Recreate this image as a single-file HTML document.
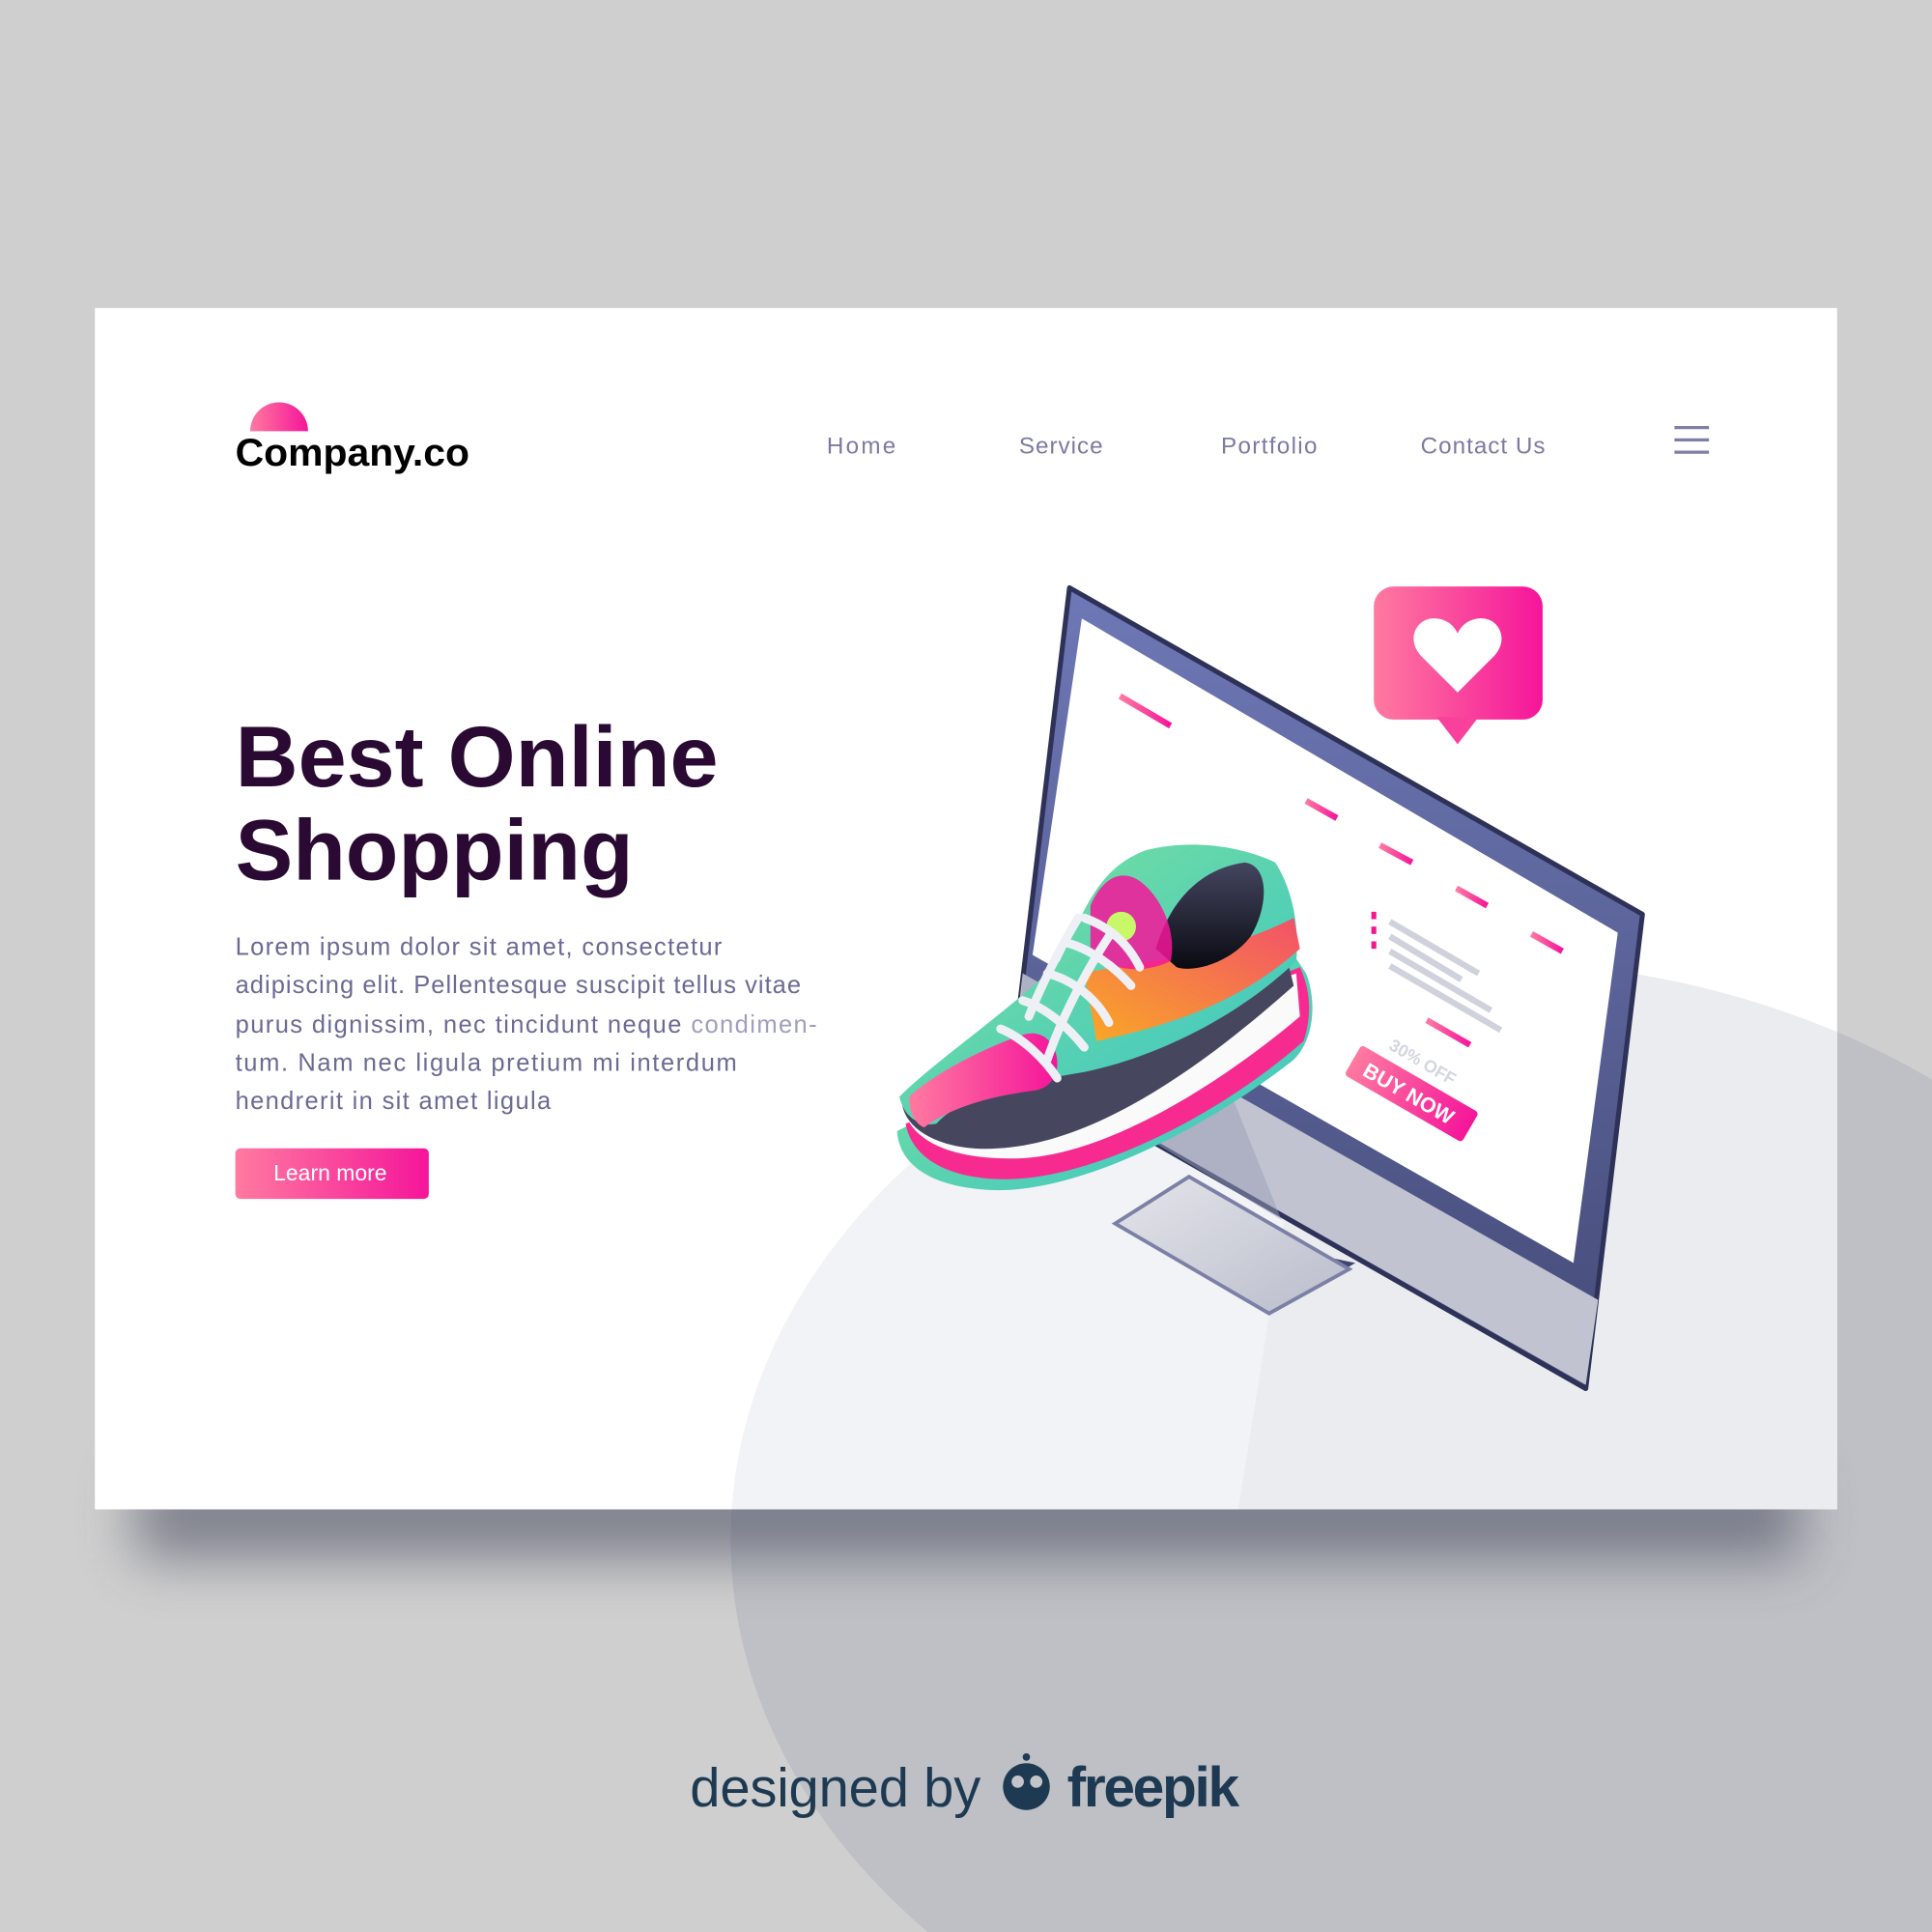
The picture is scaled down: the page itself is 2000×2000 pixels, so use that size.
<!DOCTYPE html>
<html><head><meta charset="utf-8"><style>
html,body{margin:0;padding:0;background:#cfcfcf;overflow:hidden;width:2000px;height:2000px}
svg{display:block}
text{font-family:"Liberation Sans",sans-serif}
</style></head><body>
<svg width="2000" height="2000" viewBox="0 0 1568 1568" xmlns="http://www.w3.org/2000/svg">
<defs>
<filter id="sh" x="-50%" y="-200%" width="200%" height="500%"><feGaussianBlur stdDeviation="22"/></filter>
<clipPath id="card"><rect x="77" y="250" width="1414" height="975"/></clipPath>
<clipPath id="ell"><ellipse cx="1200" cy="1250" rx="607" ry="470"/></clipPath>
<linearGradient id="pk" x1="0" x2="1"><stop offset="0" stop-color="#ff7aa0"/><stop offset="1" stop-color="#f5159a"/></linearGradient>
<linearGradient id="frm" x1="0" y1="0" x2="0" y2="1"><stop offset="0" stop-color="#6e78b6"/><stop offset="1" stop-color="#454b78"/></linearGradient>
<linearGradient id="tl" x1="0" y1="0" x2="1" y2="1"><stop offset="0" stop-color="#7fe39a"/><stop offset="1" stop-color="#38c3c6"/></linearGradient>
<linearGradient id="dk" x1="0" y1="0" x2="0" y2="1"><stop offset="0" stop-color="#444660"/><stop offset="1" stop-color="#0a0a12"/></linearGradient>
<linearGradient id="or" x1="0" y1="1" x2="1" y2="0"><stop offset="0" stop-color="#f9a825"/><stop offset="1" stop-color="#f2506a"/></linearGradient>
<linearGradient id="base" x1="0" y1="0" x2="1" y2="1"><stop offset="0" stop-color="#e4e5ea"/><stop offset="1" stop-color="#b9bccb"/></linearGradient>
</defs>
<rect width="1568" height="1568" fill="#cfcfcf"/>
<ellipse cx="1200" cy="1250" rx="607" ry="470" fill="#bfc0c5"/>
<rect x="110" y="1195" width="1350" height="70" fill="#4a4d60" opacity="0.6" filter="url(#sh)"/>
<rect x="77" y="250" width="1414" height="975" fill="#fff"/>
<g clip-path="url(#card)">
<ellipse cx="1200" cy="1250" rx="607" ry="470" fill="#eaecef"/>
<g clip-path="url(#ell)"><polygon points="560,1225 1005,1225 1060,880 560,880" fill="#f4f5f7" opacity="0.8"/></g>
</g>
<!-- logo -->
<path d="M203,350 A23,23 0 0 1 250,350 Z" fill="url(#pk)"/>
<text x="191" y="378" font-size="31" font-weight="bold" fill="#000" textLength="190" lengthAdjust="spacingAndGlyphs">Company.co</text>
<g font-size="19" fill="#7c7aa0">
<text x="671" y="368" textLength="56">Home</text><text x="827" y="368" textLength="68">Service</text><text x="991" y="368" textLength="78">Portfolio</text><text x="1153" y="368" textLength="101">Contact Us</text>
</g>
<g stroke="#7f7ea3" stroke-width="2.6"><line x1="1359" y1="347" x2="1387" y2="347"/><line x1="1359" y1="357" x2="1387" y2="357"/><line x1="1359" y1="367" x2="1387" y2="367"/></g>
<text x="191" y="638" font-size="70" font-weight="bold" fill="#2a0a33" textLength="392" lengthAdjust="spacingAndGlyphs">Best Online</text>
<text x="191" y="714" font-size="70" font-weight="bold" fill="#2a0a33" textLength="323" lengthAdjust="spacingAndGlyphs">Shopping</text>
<g font-size="20" fill="#6c6a93">
<text x="191" y="775" textLength="395">Lorem ipsum dolor sit amet, consectetur</text>
<text x="191" y="806" textLength="459">adipiscing elit. Pellentesque suscipit tellus vitae</text>
<text x="191" y="838" textLength="472">purus dignissim, nec tincidunt neque <tspan fill="#a09fbd">condimen-</tspan></text>
<text x="191" y="869" textLength="407">tum. Nam nec ligula pretium mi interdum</text>
<text x="191" y="900" textLength="256">hendrerit in sit amet ligula</text>
</g>
<rect x="191" y="932" width="157" height="41" rx="4" fill="url(#pk)"/>
<text x="268" y="958" font-size="18" fill="#fff" text-anchor="middle">Learn more</text>
<!-- stand -->
<polygon points="980,1000 1100,1025 1035,1063" fill="#3f4470"/>
<polygon points="905,993 965,955 1095,1030 1030,1066" fill="url(#base)" stroke="#7c80a6" stroke-width="3"/>
<!-- monitor -->
<polygon points="868,477 1333,742 1287,1127 822,862" fill="url(#frm)" stroke="#2e3258" stroke-width="4" stroke-linejoin="round"/>
<polygon points="1297,1055 1287,1124 822,860 830,790" fill="#c1c4d0"/>
<polygon points="878,502 1313,757 1277,1025 838,775" fill="#fff"/>
<polygon points="830,790 1000,890 1040,990 826,860" fill="#9a9db6" opacity="0.5"/>
<g stroke="url(#pk)" stroke-width="5">
<line x1="909" y1="565" x2="950" y2="589"/><line x1="1060" y1="650" x2="1085" y2="664"/><line x1="1120" y1="686" x2="1146" y2="700"/><line x1="1182" y1="721" x2="1207" y2="735"/><line x1="1243" y1="758" x2="1268" y2="772"/><line x1="1158" y1="828" x2="1193" y2="848"/>
</g>
<g stroke="#cfd2dc" stroke-width="5">
<line x1="1128" y1="748" x2="1200" y2="790"/><line x1="1128" y1="760" x2="1186" y2="795"/><line x1="1128" y1="772" x2="1210" y2="820"/><line x1="1128" y1="784" x2="1218" y2="836"/>
</g>
<g fill="#f5158f"><rect x="1113" y="740" width="4" height="6"/><rect x="1113" y="752" width="4" height="6"/><rect x="1113" y="764" width="4" height="6"/></g>
<g transform="translate(1105,848) rotate(30)">
<rect x="0" y="0" width="110" height="28" rx="3" fill="url(#pk)"/>
<text x="12" y="21" font-size="17" font-weight="bold" fill="#fff">BUY NOW</text>
<text x="20" y="-8" font-size="14" font-weight="bold" fill="#d3d5df">30% OFF</text>
</g>
<!-- heart bubble -->
<rect x="1115" y="476" width="137" height="108" rx="16" fill="url(#pk)"/>
<polygon points="1166,582 1200,582 1183,604" fill="#f9409a"/>
<path d="M1183,562 L1154,533 C1140,519 1150,500 1166,502 C1175,503 1180,508 1183,514 C1186,508 1191,503 1200,502 C1216,500 1226,519 1212,533 Z" fill="#fff"/>
<!-- shoe -->
<path d="M728,918 C730,948 760,965 810,966 C880,966 980,915 1050,860 C1068,842 1068,810 1060,790 L1040,760 Z" fill="url(#tl)"/>
<path d="M735,912 C740,940 770,958 820,957 C890,955 990,905 1058,845 C1066,820 1062,800 1055,785 Z" fill="#f72a8f"/>
<path d="M735,905 C745,930 780,942 830,940 C900,936 990,880 1055,825 L1052,790 Z" fill="#fafafa"/>
<path d="M732,895 C735,920 770,935 810,932 C880,928 960,880 1050,800 L1040,760 Z" fill="#46475f"/>
<path d="M730,890 C760,860 820,820 860,780 C880,740 890,705 930,690 C970,680 1010,688 1035,700 C1048,720 1055,750 1052,780 C1000,830 930,860 880,870 C820,880 780,890 760,912 C745,915 733,905 730,890 Z" fill="url(#tl)"/>
<path d="M738,890 C760,870 800,850 830,840 C860,830 870,880 840,885 C800,890 770,900 750,915 C742,912 737,900 738,890 Z" fill="url(#pk)"/>
<path d="M880,790 C920,780 980,780 1050,745 L1055,770 C1010,810 960,830 890,845 Z" fill="url(#or)"/>
<path d="M938,770 C950,730 975,705 1010,700 C1030,702 1030,735 1015,760 C1000,780 970,790 955,785 Z" fill="url(#dk)"/>
<path d="M885,735 C895,712 910,705 925,715 C945,730 955,760 950,780 C930,790 900,790 885,770 Z" fill="#f5159a" opacity="0.85"/>
<circle cx="910" cy="752" r="12" fill="#c8f76a"/>
<g stroke="#eef0f6" stroke-width="7" stroke-linecap="round" fill="none">
<path d="M880,745 C900,752 915,765 925,785"/><path d="M865,765 C885,770 905,785 918,800"/><path d="M850,790 C870,795 890,810 900,830"/><path d="M830,812 C850,818 868,835 880,850"/><path d="M812,835 C830,842 848,860 858,875"/>
<path d="M875,745 C860,770 845,800 835,825"/><path d="M900,760 C880,790 860,830 850,860"/>
</g>
<!-- freepik -->
<text x="560" y="1466" font-size="44" fill="#1d3a52" textLength="236">designed by</text>
<circle cx="833" cy="1450" r="19" fill="#1d3a52"/>
<circle cx="826" cy="1446" r="5" fill="#c4c5ca"/><circle cx="841" cy="1446" r="5" fill="#c4c5ca"/>
<circle cx="833" cy="1426" r="3" fill="#1d3a52"/>
<text x="866" y="1466" font-size="46" font-weight="bold" fill="#1d3a52" textLength="140">freepik</text>
</svg>
</body></html>
